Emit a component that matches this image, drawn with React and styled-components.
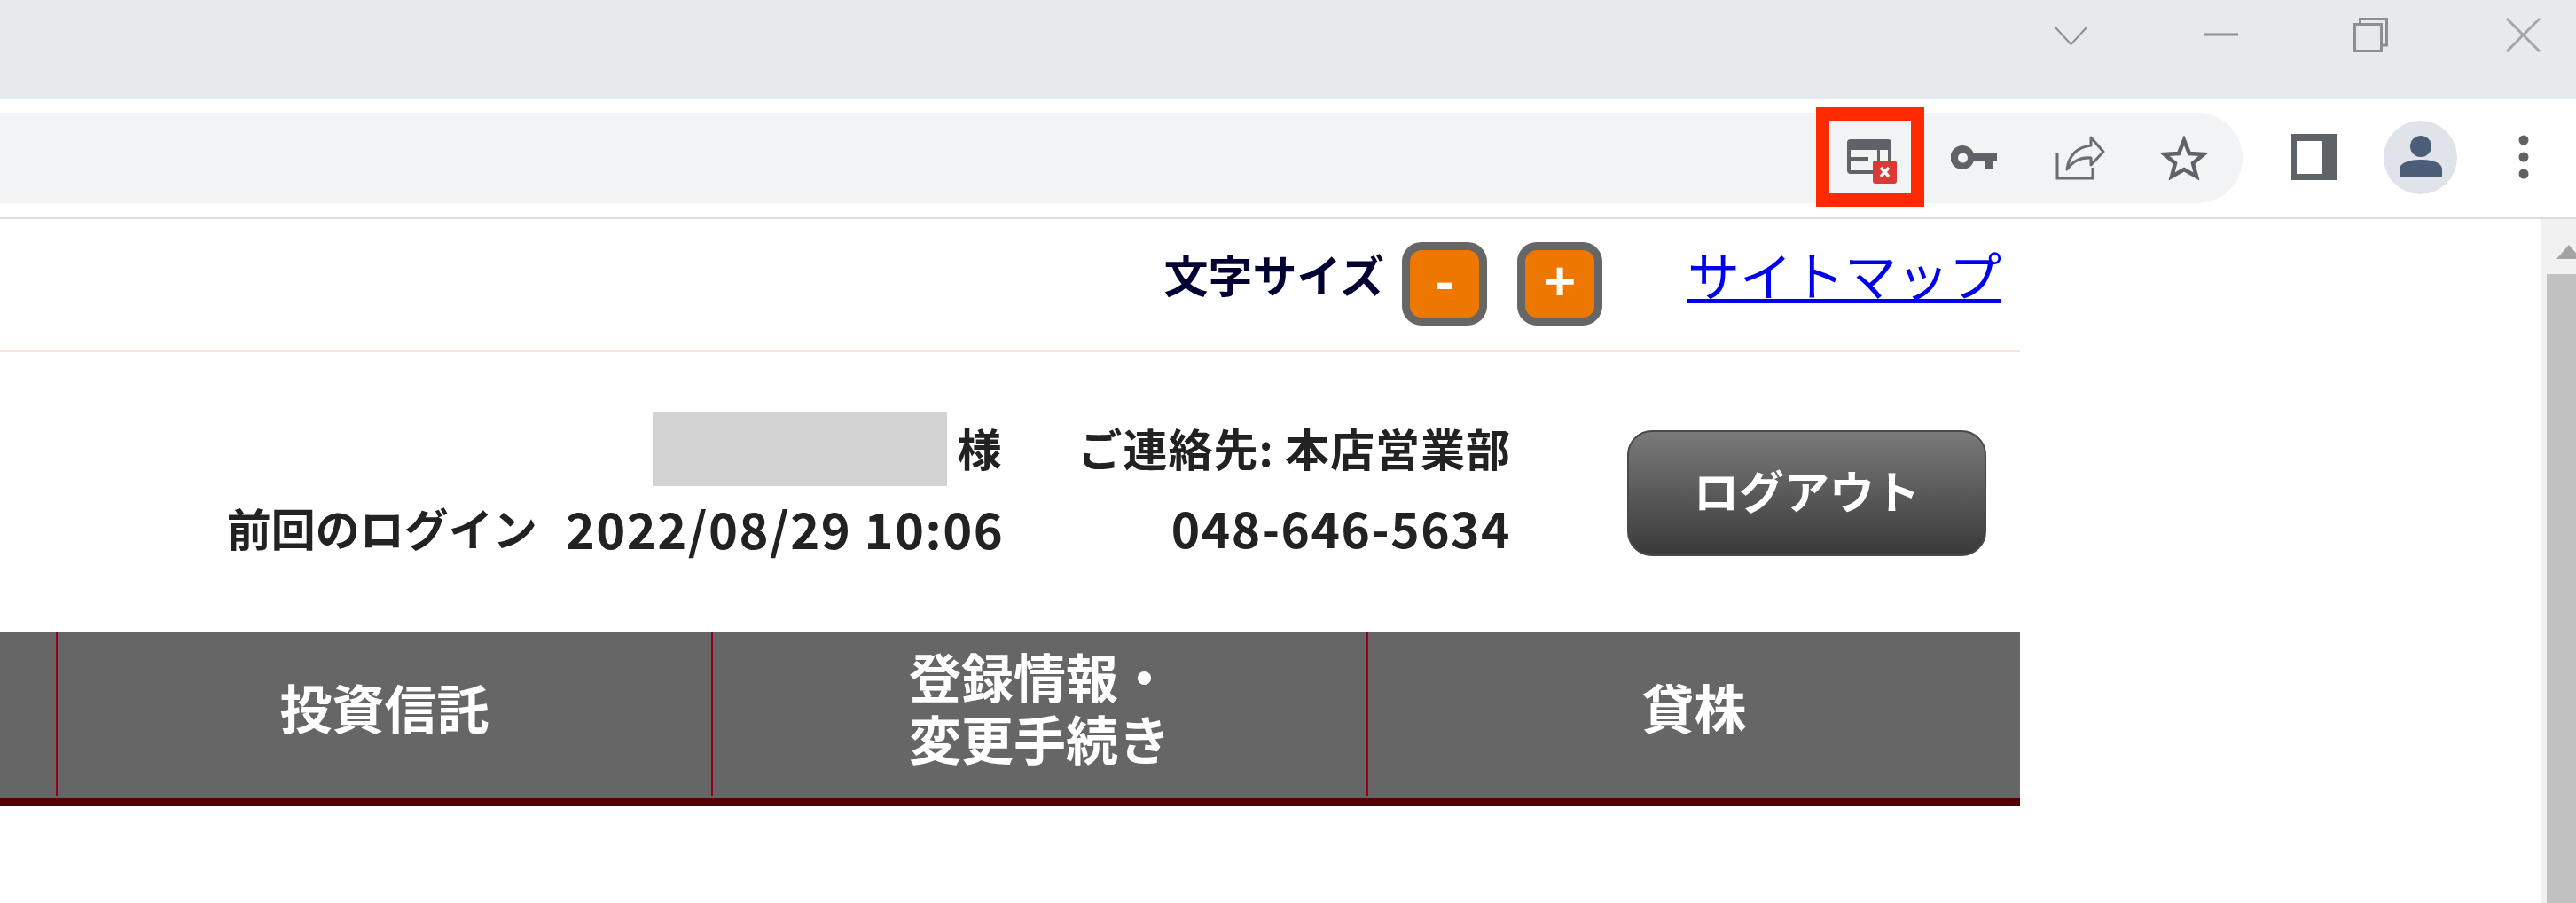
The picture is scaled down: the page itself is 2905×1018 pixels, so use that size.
import React from "react"
import styled, { createGlobalStyle } from "styled-components"

const GlobalStyle = createGlobalStyle`
  html, body {
    margin: 0;
    padding: 0;
    background: #FFF;
    overflow: hidden;
  }
  * {
    box-sizing: border-box;
  }
`;

const Screen = styled.div`
  width: 2905px;
  height: 1018px;
  overflow: hidden;
  display: flex;
  flex-direction: column;
  font-family: "Noto Sans CJK JP", "Noto Sans", sans-serif;
`;

const TitleBar = styled.div`
  height: 112px;
  flex: none;
  display: flex;
  justify-content: flex-end;
  padding: 20px 40px 0 0;
  gap: 130px;
  background: #E7EAED;
`;

const WindowIcon = styled.svg`
  width: 39px;
  height: 39px;
  margin-left: ${(p) => p.$offset || 0}px;
  fill: none;
  stroke: ${(p) => p.$stroke || "#8C8F92"};
  stroke-width: 3;
`;

const Toolbar = styled.div`
  height: 135px;
  flex: none;
  display: flex;
  align-items: flex-start;
  padding-top: 15px;
  background: #FFF;
  border-bottom: 2px solid #DADCE0;
`;

const Omnibox = styled.div`
  width: 2529px;
  height: 102px;
  flex: none;
  display: flex;
  justify-content: flex-end;
  align-items: center;
  padding-right: 39px;
  background: #F1F3F4;
  border-radius: 0 51px 51px 0;
`;

const BlockedBox = styled.div`
  width: 122px;
  height: 112px;
  margin-bottom: 2px;
  padding: 9px 0 0 4px;
  flex: none;
  display: flex;
  align-items: center;
  justify-content: center;
  border: 15px solid #FF2A00;
`;

const OmniIcon = styled.svg`
  flex: none;
  margin-left: ${(p) => p.$gap}px;
`;

const ProfileTools = styled.div`
  display: flex;
  align-items: center;
  height: 102px;
  flex: none;
`;

const SidePanelIcon = styled.svg`
  width: 52px;
  height: 52px;
  margin-left: 55px;
  margin-bottom: 2px;
`;

const Avatar = styled.div`
  width: 83px;
  height: 83px;
  margin-left: 52px;
  margin-bottom: 2px;
  display: flex;
  align-items: center;
  justify-content: center;
  border-radius: 50%;
  background: #E0E4EA;
`;

const MenuDots = styled.svg`
  width: 12px;
  height: 50px;
  margin-left: 69px;
  margin-bottom: 2px;
`;

const Viewport = styled.div`
  flex: 1;
  display: flex;
  min-height: 0;
`;

const Content = styled.div`
  width: 2866px;
  flex: none;
`;

const Page = styled.div`
  width: 2278px;
`;

const TopRow = styled.div`
  height: 148px;
  display: flex;
  justify-content: flex-end;
  align-items: center;
  padding: 0 21px 2px 0;
`;

const SizeLabel = styled.span`
  font-size: 50px;
  font-weight: 700;
  color: #000033;
  margin: 0 20px 24px 0;
`;

const SizeButton = styled.button`
  width: 96px;
  height: 94px;
  margin-right: ${(p) => p.$gap}px;
  padding: 0 0 6px;
  border: 9px solid #666;
  border-radius: 22px;
  background: #EE7700;
  color: #FFF;
  font-family: "Liberation Sans", sans-serif;
  font-size: 62px;
  line-height: 1;
  font-weight: 700;
`;

const SiteMapLink = styled.a`
  margin-bottom: 22px;
  font-size: 59px;
  line-height: 1.2;
  color: #0000EE;
  text-decoration: underline;
  text-decoration-thickness: 5px;
  text-underline-offset: 3px;
  white-space: nowrap;
`;

const Rule = styled.div`
  height: 2px;
  background: #F7E8D6;
`;

const UserBlock = styled.div`
  height: 315px;
  display: flex;
  justify-content: flex-end;
  align-items: flex-start;
  padding: 62px 38px 0 0;
  color: #222;
  font-size: 50px;
  font-weight: 700;
`;

const InfoColumn = styled.div`
  display: flex;
  flex-direction: column;
  align-items: flex-end;
  margin-right: ${(p) => p.$gap}px;
`;

const InfoLine = styled.div`
  height: 90px;
  display: flex;
  align-items: center;
  white-space: nowrap;
`;

const Masked = styled.span`
  width: 332px;
  height: 83px;
  margin: 4px 11px 0 0;
  background: #D3D3D3;
`;

const ContactName = styled.span`
  letter-spacing: 1px;
`;

const Numbers = styled.span`
  margin: 0 -3px 0 32px;
  font-size: 56px;
  letter-spacing: 1.5px;
`;

const Phone = styled.span`
  font-size: 55px;
  letter-spacing: 1.5px;
`;

const LogoutButton = styled.button`
  width: 405px;
  height: 142px;
  margin-top: 26px;
  padding: 0 0 8px;
  flex: none;
  border: 2px solid #4A4A4A;
  border-radius: 28px;
  background: linear-gradient(#7A7A7A, #3A3A3A);
  color: #FFF;
  font-family: inherit;
  font-size: 51px;
  font-weight: 700;
`;

const GlobalNav = styled.nav`
  height: 197px;
  display: grid;
  grid-template-columns: 63px 739px 739px 1fr;
  background: #666;
  border-bottom: 9px solid #4F0008;
`;

const NavCell = styled.div`
  height: 185px;
  padding-bottom: 16px;
  display: flex;
  align-items: center;
  justify-content: center;
  border-left: ${(p) => (p.$first ? "0" : "2px solid #960018")};
  color: #FFF;
  font-size: 59px;
  line-height: 70px;
  font-weight: 700;
`;

const Scrollbar = styled.div`
  flex: 1;
  min-width: 0;
  padding-left: 6px;
  display: flex;
  flex-direction: column;
  background: #F1F1F1;
`;

const ScrollArrow = styled.div`
  height: 62px;
  flex: none;
  padding: 26px 0 0 11px;
  overflow: hidden;
`;

const ScrollThumb = styled.div`
  flex: 1;
  background: #C1C1C1;
`;

const App = () => (
  <Screen>
    <GlobalStyle />
    <TitleBar>
      <WindowIcon viewBox="0 0 39 39">
        <path d="M1 10 L19.5 30 L38 10" strokeWidth="2" />
      </WindowIcon>
      <WindowIcon viewBox="0 0 39 39">
        <path d="M0 19 H39" />
      </WindowIcon>
      <WindowIcon viewBox="0 0 39 39">
        <rect x="1.5" y="7.5" width="30" height="30" />
        <path d="M7.5 7 V1.5 H37.5 V31 H32" />
      </WindowIcon>
      <WindowIcon viewBox="0 0 39 39" $stroke="#A4A7AA" $offset={3}>
        <path d="M1 1 L38 38 M38 1 L1 38" />
      </WindowIcon>
    </TitleBar>

    <Toolbar>
      <Omnibox>
        <BlockedBox>
          <svg width="56" height="50" viewBox="0 0 56 50">
            <path
              d="M4 0 H46 Q50 0 50 4 V24 H46 V12 H37 V24 H34 V12 H4 V20 H24 V24 H4 V35 H29 V39 H4 Q0 39 0 35 V4 Q0 0 4 0 Z"
              fill="#5F6368"
            />
            <rect x="29" y="24" width="27" height="26" rx="3" fill="#D93A35" />
            <path d="M38 32 L47 42 M47 32 L38 42" stroke="#FFF" strokeWidth="3.5" />
          </svg>
        </BlockedBox>
        <OmniIcon $gap={30} width="52" height="28" viewBox="0 0 52 28">
          <path
            d="M13.5 0 A13.5 13.5 0 0 1 26 9 H52 V17 H48 V27 H38 V17 H26 A13.5 13.5 0 1 1 13.5 0 Z M13.5 8.5 A5.5 5.5 0 1 0 13.5 19.5 A5.5 5.5 0 1 0 13.5 8.5 Z"
            fill="#5F6368"
            fillRule="evenodd"
          />
        </OmniIcon>
        <OmniIcon $gap={66} width="56" height="50" viewBox="0 0 56 50" fill="none" stroke="#6A6E73" strokeWidth="3">
          <path d="M2 20 V48 H42 V36" />
          <path d="M40 2 L54 18 L40 33 V25 C28 24 20 28 13 38 C15 22 25 13 40 11 Z" strokeLinejoin="round" />
        </OmniIcon>
        <OmniIcon $gap={62} width="54" height="50" viewBox="0 0 54 50" fill="none" stroke="#5F6368" strokeWidth="4.5">
          <path d="M27 5 L33 20 L49 21 L37 31 L41 46 L27 38 L13 46 L17 31 L5 21 L21 20 Z" strokeLinejoin="miter" />
        </OmniIcon>
      </Omnibox>
      <ProfileTools>
        <SidePanelIcon viewBox="0 0 52 52">
          <path d="M0 0 H52 V52 H0 Z M6 8 V45 H34 V8 Z" fill="#5F6368" fillRule="evenodd" />
        </SidePanelIcon>
        <Avatar>
          <svg width="48" height="48" viewBox="0 0 48 48" fill="#4C5D78">
            <circle cx="24" cy="12" r="12" />
            <path d="M0 46 V38 C0 30 12 27 24 27 C36 27 48 30 48 38 V46 Z" />
          </svg>
        </Avatar>
        <MenuDots viewBox="0 0 12 50" fill="#5F6368">
          <circle cx="6" cy="6" r="5.5" />
          <circle cx="6" cy="25" r="5.5" />
          <circle cx="6" cy="44" r="5.5" />
        </MenuDots>
      </ProfileTools>
    </Toolbar>

    <Viewport>
      <Content>
        <Page>
          <TopRow>
            <SizeLabel>文字サイズ</SizeLabel>
            <SizeButton $gap={34}>-</SizeButton>
            <SizeButton $gap={96}>+</SizeButton>
            <SiteMapLink href="#">サイトマップ</SiteMapLink>
          </TopRow>
          <Rule />
          <UserBlock>
            <InfoColumn $gap={86}>
              <InfoLine>
                <Masked />様
              </InfoLine>
              <InfoLine>
                前回のログイン<Numbers>2022/08/29 10:06</Numbers>
              </InfoLine>
            </InfoColumn>
            <InfoColumn $gap={131}>
              <InfoLine>
                <ContactName>ご連絡先: 本店営業部</ContactName>
              </InfoLine>
              <InfoLine>
                <Phone>048-646-5634</Phone>
              </InfoLine>
            </InfoColumn>
            <LogoutButton>ログアウト</LogoutButton>
          </UserBlock>
          <GlobalNav>
            <NavCell $first />
            <NavCell>投資信託</NavCell>
            <NavCell>
              登録情報・
              <br />
              変更手続き
            </NavCell>
            <NavCell>貸株</NavCell>
          </GlobalNav>
        </Page>
      </Content>
      <Scrollbar>
        <ScrollArrow>
          <svg width="28" height="16" viewBox="0 0 28 16">
            <path d="M14 0 L28 16 H0 Z" fill="#A3A3A3" />
          </svg>
        </ScrollArrow>
        <ScrollThumb />
      </Scrollbar>
    </Viewport>
  </Screen>
)

export default App
